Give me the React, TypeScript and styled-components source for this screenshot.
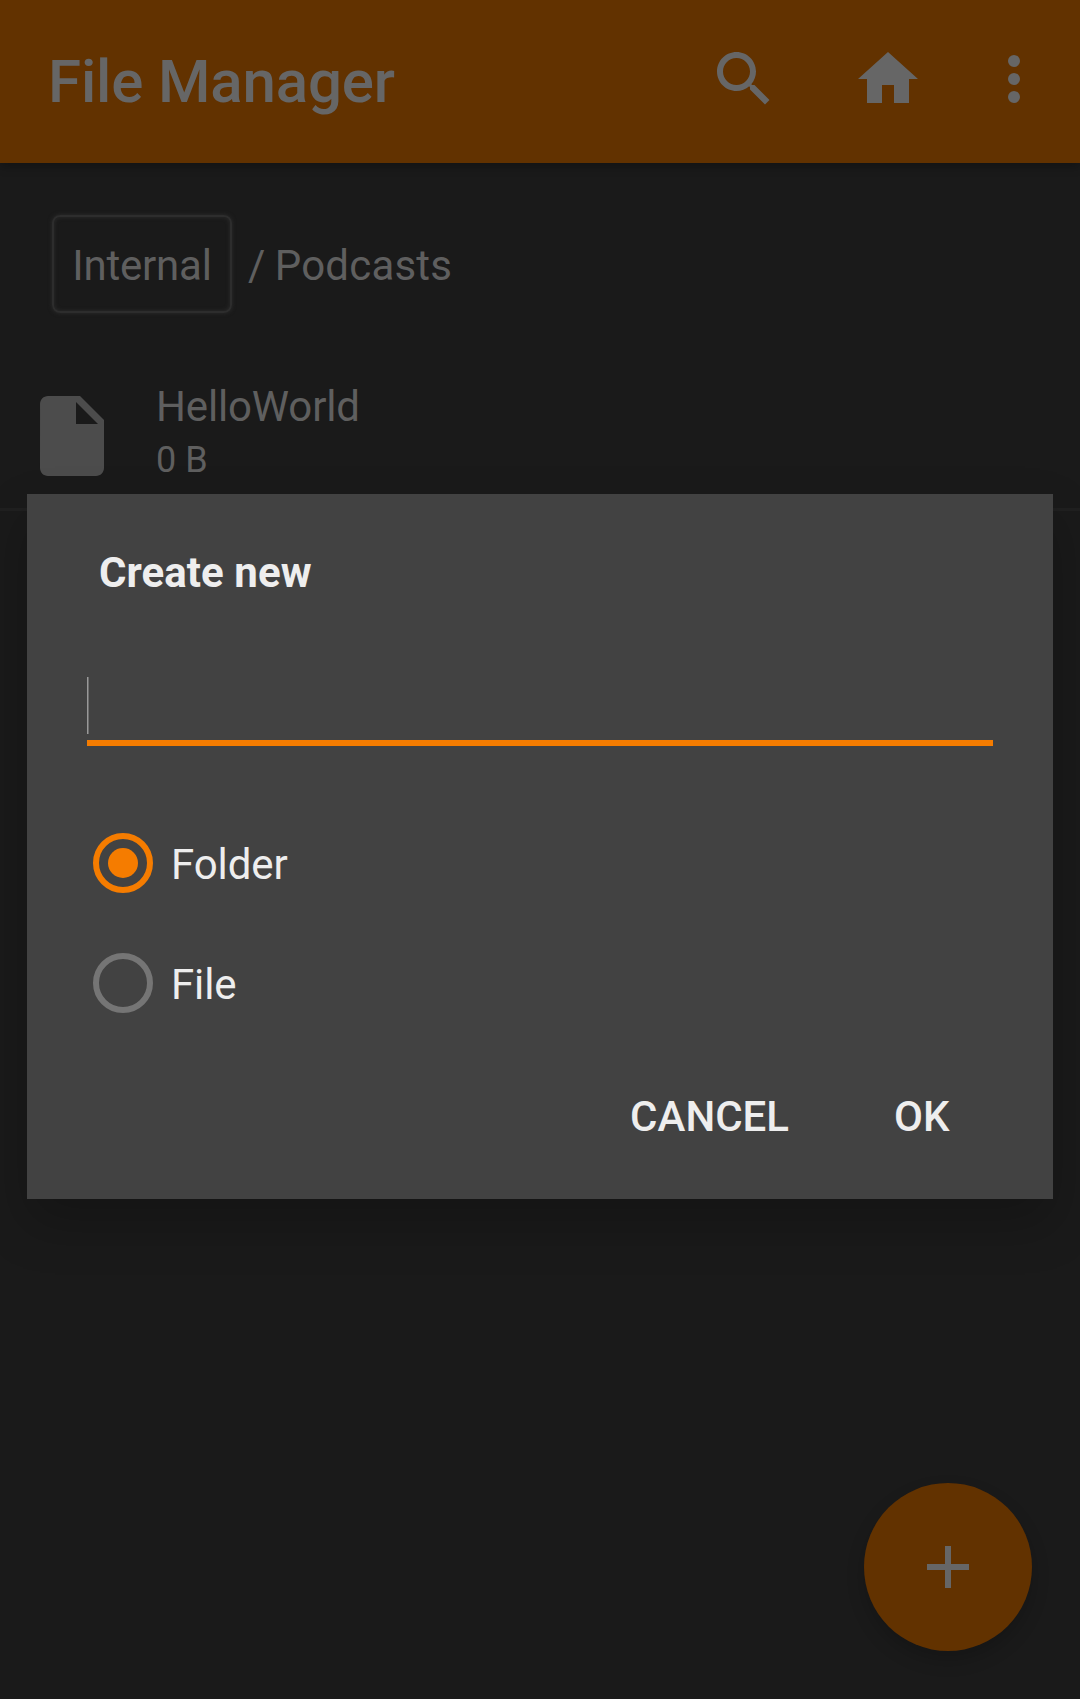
import React, { useState } from "react";
import styled, { createGlobalStyle, css } from "styled-components";

const GlobalStyle = createGlobalStyle`
  *, *::before, *::after { box-sizing: border-box; }
  html, body { margin: 0; padding: 0; background: #1a1a1a; }
  body { font-family: Roboto, "Noto Sans", sans-serif; overflow: hidden; }
  button { font: inherit; letter-spacing: inherit; border: 0; padding: 0; background: none; cursor: pointer; }
`;

const Screen = styled.div`
  position: relative;
  display: flex;
  flex-direction: column;
  width: 1080px;
  height: 1699px;
  background: #1a1a1a;
  color: #5f5f5f;
  overflow: hidden;
`;

const AppBar = styled.header`
  display: flex;
  align-items: flex-start;
  height: 163px;
  padding: 43px 30px 0 48px;
  background: #623200;
  color: #666666;
  box-shadow: 0 3px 10px rgba(0, 0, 0, 0.3);
`;

const AppTitle = styled.h1`
  flex: 1;
  margin: 0;
  padding-top: 3px;
  font-size: 60px;
  font-weight: 500;
  line-height: 72px;
  letter-spacing: -0.15px;
`;

const ActionButton = styled.button<{ $gap?: number }>`
  display: block;
  width: 72px;
  height: 72px;
  margin-left: ${(p) => p.$gap ?? 0}px;
  color: inherit;
`;

const Icon = styled.svg<{ $size: number }>`
  display: block;
  width: ${(p) => p.$size}px;
  height: ${(p) => p.$size}px;
  fill: currentColor;
`;

const Breadcrumbs = styled.nav`
  display: flex;
  align-items: center;
  gap: 16px;
  padding: 51px 52px 0;
  height: 150px;
  font-size: 42px;
  line-height: 49px;
`;

const Crumb = styled.button`
  width: 180px;
  height: 98px;
  padding: 4px 0 0;
  color: inherit;
  letter-spacing: -0.2px;
  border: 2px solid #2d2d2d;
  border-radius: 8px;
  box-shadow: 0 0 4px #2d2d2d, inset 0 0 4px #2d2d2d;
`;

const CrumbPath = styled.span`
  padding-top: 4px;
  white-space: pre;
  letter-spacing: 0.2px;
  word-spacing: -1.4px;
`;

const FileRow = styled.article`
  display: flex;
  align-items: flex-start;
  height: 198px;
  padding: 75px 24px 0;
  border-bottom: 3px solid #202020;
`;

const FileIcon = styled(Icon)`
  color: #4c4c4c;
`;

const FileText = styled.div`
  display: flex;
  flex-direction: column;
  padding-left: 36px;
`;

const FileName = styled.span`
  margin-top: -6px;
  font-size: 42px;
  line-height: 49px;
  letter-spacing: -0.15px;
`;

const FileSize = styled.span`
  margin-top: 8px;
  font-size: 36px;
  line-height: 42px;
`;

const Fab = styled.button`
  position: absolute;
  right: 48px;
  bottom: 48px;
  display: flex;
  align-items: center;
  justify-content: center;
  width: 168px;
  height: 168px;
  border-radius: 50%;
  background: #623200;
  color: #666666;
  box-shadow: 0 9px 18px rgba(0, 0, 0, 0.18);
`;

const DialogLayer = styled.div`
  position: absolute;
  inset: 0;
  display: flex;
  align-items: flex-start;
  justify-content: center;
  padding-top: 494px;
`;

const Dialog = styled.section`
  display: flex;
  flex-direction: column;
  width: 1026px;
  height: 705px;
  padding: 54px 60px 0;
  background: #424242;
  color: #eeeeee;
  font-size: 42px;
  line-height: 49px;
  box-shadow: 0 24px 48px rgba(0, 0, 0, 0.22);
`;

const DialogTitle = styled.h2`
  margin: 0 0 0 12px;
  font-size: 42px;
  font-weight: 700;
  line-height: 49px;
  letter-spacing: 0.05px;
`;

const NameField = styled.div`
  display: flex;
  height: 69px;
  margin-top: 80px;
  border-bottom: 6px solid #f57c00;
`;

const Caret = styled.span`
  width: 2px;
  height: 57px;
  border-left: 1px solid #999999;
  background: #6e6e6e;
`;

const RadioGroup = styled.div`
  display: flex;
  flex-direction: column;
  gap: 60px;
  padding: 87px 6px 0;
`;

const RadioOption = styled.button`
  display: flex;
  align-items: center;
  gap: 18px;
  height: 60px;
  color: inherit;
  letter-spacing: -0.1px;
`;

const RadioMark = styled.span<{ $checked: boolean }>`
  display: flex;
  align-items: center;
  justify-content: center;
  width: 60px;
  height: 60px;
  border: 6px solid ${(p) => (p.$checked ? "#f57c00" : "#757575")};
  border-radius: 50%;
  ${(p) =>
    p.$checked &&
    css`
      &::after {
        content: "";
        width: 30px;
        height: 30px;
        border-radius: 50%;
        background: #f57c00;
      }
    `}
`;

const RadioLabel = styled.span`
  padding-top: 3px;
`;

const DialogActions = styled.footer`
  display: flex;
  justify-content: flex-end;
  gap: 105px;
  padding: 79px 43.5px 0 0;
`;

const DialogButton = styled.button`
  color: inherit;
  font-weight: 500;
  text-transform: uppercase;
`;

const options = ["Folder", "File"];

export default function App() {
  const [selected, setSelected] = useState("Folder");

  return (
    <>
      <GlobalStyle />
      <Screen>
        <AppBar>
          <AppTitle>File Manager</AppTitle>
          <ActionButton aria-label="Search">
            <Icon $size={72} viewBox="0 0 24 24">
              <path d="M15.5 14h-.79l-.28-.27C15.41 12.59 16 11.11 16 9.5 16 5.91 13.09 3 9.5 3S3 5.91 3 9.5 5.91 16 9.5 16c1.61 0 3.09-.59 4.23-1.57l.27.28v.79l5 4.99L20.49 19l-4.99-5zm-6 0C7.01 14 5 11.99 5 9.5S7.01 5 9.5 5 14 7.01 14 9.5 11.99 14 9.5 14z" />
            </Icon>
          </ActionButton>
          <ActionButton aria-label="Home" $gap={72}>
            <Icon $size={72} viewBox="0 0 24 24">
              <path d="M10 20v-6h4v6h5v-8h3L12 3 2 12h3v8z" />
            </Icon>
          </ActionButton>
          <ActionButton aria-label="More options" $gap={54}>
            <Icon $size={72} viewBox="0 0 24 24">
              <circle cx="12" cy="6" r="2" />
              <circle cx="12" cy="12" r="2" />
              <circle cx="12" cy="18" r="2" />
            </Icon>
          </ActionButton>
        </AppBar>

        <Breadcrumbs>
          <Crumb>Internal</Crumb>
          <CrumbPath>/ Podcasts</CrumbPath>
        </Breadcrumbs>

        <FileRow>
          <FileIcon $size={96} viewBox="0 0 24 24">
            <path d="M6 2c-1.1 0-1.99.9-1.99 2L4 20c0 1.1.89 2 1.99 2H18c1.1 0 2-.9 2-2V8l-6-6H6zm7 7V3.5L18.5 9H13z" />
          </FileIcon>
          <FileText>
            <FileName>HelloWorld</FileName>
            <FileSize>0 B</FileSize>
          </FileText>
        </FileRow>

        <Fab aria-label="Create new">
          <Icon $size={72} viewBox="0 0 24 24">
            <path d="M19 13h-6v6h-2v-6H5v-2h6V5h2v6h6v2z" />
          </Icon>
        </Fab>

        <DialogLayer>
          <Dialog role="dialog">
            <DialogTitle>Create new</DialogTitle>
            <NameField>
              <Caret />
            </NameField>
            <RadioGroup role="radiogroup">
              {options.map((option) => (
                <RadioOption
                  key={option}
                  role="radio"
                  aria-checked={selected === option}
                  onClick={() => setSelected(option)}
                >
                  <RadioMark $checked={selected === option} />
                  <RadioLabel>{option}</RadioLabel>
                </RadioOption>
              ))}
            </RadioGroup>
            <DialogActions>
              <DialogButton>Cancel</DialogButton>
              <DialogButton>OK</DialogButton>
            </DialogActions>
          </Dialog>
        </DialogLayer>
      </Screen>
    </>
  );
}
